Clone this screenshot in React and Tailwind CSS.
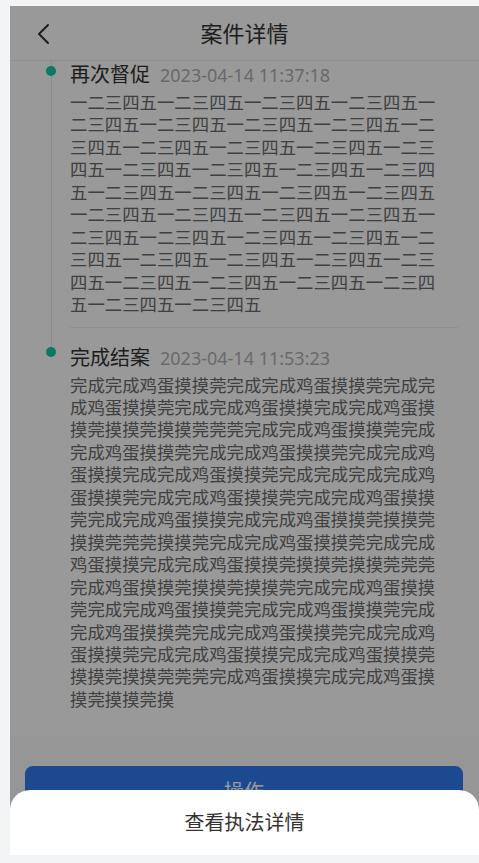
import React from "react";

const FONT = { fontFamily: '"Noto Sans", "Noto Sans CJK SC", sans-serif' };

const RECORDS = [
  {
    title: "再次督促",
    time: "2023-04-14 11:37:18",
    text: "一二三四五".repeat(40),
  },
  {
    title: "完成结案",
    time: "2023-04-14 11:53:23",
    text:
      "完成完成鸡蛋摸摸莞完成完成鸡蛋摸摸莞完成完" +
      "成鸡蛋摸摸莞完成完成鸡蛋摸摸完成完成鸡蛋摸" +
      "摸莞摸摸莞摸摸莞莞莞完成完成鸡蛋摸摸莞完成" +
      "完成鸡蛋摸摸莞完成完成鸡蛋摸摸莞完成完成鸡" +
      "蛋摸摸完成完成鸡蛋摸摸莞完成完成完成完成鸡" +
      "蛋摸摸莞完成完成鸡蛋摸摸莞完成完成鸡蛋摸摸" +
      "莞完成完成鸡蛋摸摸完成完成鸡蛋摸摸莞摸摸莞" +
      "摸摸莞莞莞摸摸莞完成完成鸡蛋摸摸莞完成完成" +
      "鸡蛋摸摸完成完成鸡蛋摸摸莞摸摸莞摸摸莞莞莞" +
      "完成鸡蛋摸摸莞摸摸莞摸摸莞完成完成鸡蛋摸摸" +
      "莞完成完成鸡蛋摸摸莞完成完成鸡蛋摸摸莞完成" +
      "完成鸡蛋摸摸莞完成完成鸡蛋摸摸莞完成完成鸡" +
      "蛋摸摸莞完成完成鸡蛋摸摸完成完成鸡蛋摸摸莞" +
      "摸摸莞摸摸莞莞莞完成鸡蛋摸摸完成完成鸡蛋摸" +
      "摸莞摸摸莞摸",
  },
];

function Record({ item, first, last }) {
  return (
    <div className="flex">
      {/* timeline rail */}
      <div className="w-[10px] flex flex-col items-center">
        <div className={first ? "w-px h-[5px] bg-[#e6e6e6]" : "w-px h-[20px] bg-[#e6e6e6]"} />
        <div className="w-[10px] h-[10px] rounded-full bg-[#13c8a2] shrink-0" />
        {!last && <div className="w-px flex-1 bg-[#e6e6e6]" />}
      </div>

      <div className={first ? "flex-1 ml-[14px] pt-[2px]" : "flex-1 ml-[14px] pt-[18px] border-t border-[#eeeeee]"}>
        <div className="flex items-baseline gap-[10px] leading-[24px]">
          <span className="text-[20px] text-[#333]">{item.title}</span>
          <span className="text-[18px] text-[#b0b0b0]">{item.time}</span>
        </div>
        <p className="mt-[4px] pr-[12px] text-[17.4px] leading-[22.45px] text-[#6b6b6b] break-all">
          {item.text}
        </p>
        {!last && <div className="h-[11px]" />}
      </div>
    </div>
  );
}

export default function App() {
  return (
    <div className="min-h-[863px] bg-[#f3f4f5] pt-[6px] pl-[10px]" style={FONT}>
      <div className="relative h-[849px] bg-white flex flex-col overflow-hidden">
        {/* header */}
        <div className="h-[55px] shrink-0 flex items-center justify-center relative border-b border-[#eeeeee]">
          <button className="absolute left-[26px] top-[17px] w-[16px] h-[22px] flex items-center justify-center">
            <svg width="14" height="22" viewBox="0 0 14 22" fill="none">
              <polyline points="11,2 2,11 11,20" stroke="#333" strokeWidth="2" strokeLinecap="round" strokeLinejoin="round" />
            </svg>
          </button>
          <h1 className="text-[22px] text-[#333] font-normal">案件详情</h1>
        </div>

        {/* timeline */}
        <div className="flex-1 overflow-hidden pl-[36px] pr-[21px]">
          {RECORDS.map((r, i) => (
            <Record key={i} item={r} first={i === 0} last={i === RECORDS.length - 1} />
          ))}
        </div>

        {/* bottom action */}
        <div className="h-[119px] shrink-0 bg-[#fafafa] pt-[30px] px-[15px]">
          <button className="w-[438px] h-[52px] rounded-[8px] bg-[#307bee] text-white text-[20px]">
            操作
          </button>
        </div>

        {/* mask */}
        <div className="absolute inset-0 bg-black/40" />

        {/* action sheet */}
        <div className="absolute left-0 right-0 bottom-0 h-[65px] bg-white rounded-t-[20px] flex items-center justify-center">
          <span className="text-[20px] text-[#333]">查看执法详情</span>
        </div>
      </div>
    </div>
  );
}
